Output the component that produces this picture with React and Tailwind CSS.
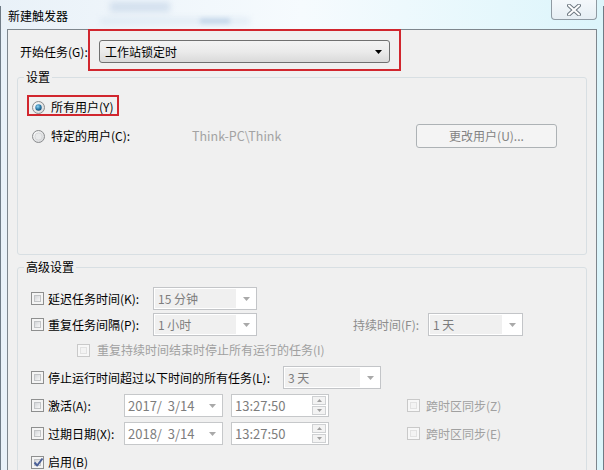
import React from "react";

function Checkbox({ checked = false, disabled = false }) {
  return (
    <span
      className={
        disabled
          ? "relative inline-block w-[13px] h-[13px] shrink-0 border border-[#c9c9c9] bg-[#f7f7f7]"
          : "relative inline-block w-[13px] h-[13px] shrink-0 border border-[#8e8f8f] bg-[#f4f4f4]"
      }
    >
      <span
        className={
          disabled
            ? "absolute left-[2px] top-[2px] w-[7px] h-[7px] border border-[#e2e2e2] bg-[#f3f3f3]"
            : "absolute left-[2px] top-[2px] w-[7px] h-[7px] border border-[#c2c4c6] bg-gradient-to-br from-[#d4d6d9] to-[#f7f7f7]"
        }
      />
      {checked && (
        <svg className="absolute left-[1px] top-[0px]" width="11" height="11" viewBox="0 0 11 11">
          <path d="M1.5 5.5 L4.2 8.5 L9.5 1.5" stroke="#4a5f97" strokeWidth="2" fill="none" strokeLinejoin="round" />
        </svg>
      )}
    </span>
  );
}

function Radio({ checked = false }) {
  return (
    <svg width="13" height="13" viewBox="0 0 13 13" className="shrink-0">
      <defs>
        <radialGradient id={checked ? "rgA" : "rgB"} cx="0.35" cy="0.35" r="0.8">
          <stop offset="0" stopColor="#ffffff" />
          <stop offset="1" stopColor="#d2d4d6" />
        </radialGradient>
        <radialGradient id="rdot" cx="0.4" cy="0.35" r="0.7">
          <stop offset="0" stopColor="#8ed4f5" />
          <stop offset="0.6" stopColor="#2a79a8" />
          <stop offset="1" stopColor="#13486e" />
        </radialGradient>
      </defs>
      <circle cx="6.5" cy="6.5" r="6" fill={checked ? "url(#rgA)" : "url(#rgB)"} stroke="#8a8c8e" strokeWidth="1" />
      {checked ? (
        <circle cx="6.5" cy="6.5" r="3.2" fill="url(#rdot)" />
      ) : (
        <circle cx="6.5" cy="6.5" r="3.6" fill="#e9eaeb" stroke="#d0d2d4" strokeWidth="0.8" />
      )}
    </svg>
  );
}

function DisCombo({ className, text }) {
  return (
    <div className={"flex border border-[#c3c5c8] bg-white " + className}>
      <div className="flex-1 m-[1px] mr-0 bg-[#f0f0f0] pl-[3px] flex items-center text-[#7d7d7d]">{text}</div>
      <div className="w-[20px] flex items-center justify-center">
        <svg width="7" height="4" viewBox="0 0 7 4">
          <path d="M0 0H7L3.5 4Z" fill="#a9a9a9" />
        </svg>
      </div>
    </div>
  );
}

function DateField({ text }) {
  return (
    <div className="flex w-[99px] h-full border border-[#c6c8ca] bg-white">
      <div className="flex-1 pl-[3px] flex items-center text-[#7d7d7d] text-[13px] whitespace-pre">{text}</div>
      <div className="w-[20px] flex items-center justify-center">
        <svg width="7" height="4" viewBox="0 0 7 4">
          <path d="M0 0H7L3.5 4Z" fill="#a9a9a9" />
        </svg>
      </div>
    </div>
  );
}

function TimeField({ text }) {
  return (
    <div className="flex w-[98px] h-full border border-[#c6c8ca] bg-white">
      <div className="flex-1 pl-[3px] flex items-center text-[#7d7d7d] text-[13px]">{text}</div>
      <div className="flex flex-col justify-center gap-[1px] pr-[2px]">
        <div className="w-[14px] h-[9px] border border-[#cfd1d3] bg-[#f3f3f3] flex items-center justify-center">
          <svg width="5" height="3" viewBox="0 0 5 3">
            <path d="M0 3H5L2.5 0Z" fill="#a0a0a0" />
          </svg>
        </div>
        <div className="w-[14px] h-[9px] border border-[#cfd1d3] bg-[#f3f3f3] flex items-center justify-center">
          <svg width="5" height="3" viewBox="0 0 5 3">
            <path d="M0 0H5L2.5 3Z" fill="#a0a0a0" />
          </svg>
        </div>
      </div>
    </div>
  );
}

export default function App() {
  return (
    <div className="relative w-[604px] h-[470px] overflow-hidden bg-gradient-to-r from-[#e9f1f8] via-[#f6fbfe] to-[#dcf5fb] font-['Noto_Sans_CJK_SC','Noto_Sans',sans-serif] text-[12px] leading-[16px] text-black">
      {/* window outer frame line */}
      <div className="absolute left-0 top-[6px] bottom-0 w-[2px] border-l border-[#6f7b86]" />
      <div className="absolute right-0 top-[6px] bottom-0 w-[2px] border-r border-[#6f7b86]" />
      {/* faint blurred background behind glass */}
      <div className="absolute left-[110px] top-[2px] w-[60px] h-[10px] bg-[#b8cbe2] opacity-50 blur-[3px]" />
      <div className="absolute left-[100px] top-[18px] w-[150px] h-[6px] bg-[#c7d8ea] opacity-40 blur-[3px]" />
      <div className="absolute left-[200px] top-[18px] w-[30px] h-[6px] bg-[#a9c3e0] opacity-50 blur-[2px]" />

      {/* title bar */}
      <div className="relative h-[29px] flex items-center pl-[8px] pt-[2px]">
        <span className="text-[12px]">新建触发器</span>
        <div className="absolute right-[7px] top-0 w-[46px] h-[20px] border border-t-0 border-[#8f9aa3] rounded-b-[4px] bg-gradient-to-b from-[#f4f8fb] to-[#e6eef4] flex items-center justify-center">
          <svg width="14" height="12" viewBox="0 0 14 12">
            <path d="M2 1.5 L12 10.5 M12 1.5 L2 10.5" stroke="#6d7780" strokeWidth="4" strokeLinecap="round" />
            <path d="M2 1.5 L12 10.5 M12 1.5 L2 10.5" stroke="#ffffff" strokeWidth="2" strokeLinecap="round" />
          </svg>
        </div>
      </div>

      {/* client area */}
      <div className="relative ml-[7px] w-[590px] h-[460px] border border-b-0 border-[#7e868d] bg-[#f0f0f0]">
        {/* start task row */}
        <div className="mt-[10px] h-[23px] flex items-center">
          <span className="pl-[12px] w-[91px] shrink-0">开始任务(G):</span>
          <div className="w-[291px] h-[23px] rounded-[3px] border border-[#707070] bg-gradient-to-b from-[#f3f3f3] via-[#ebebeb] to-[#dadada] flex items-center justify-between pl-[5px] pr-[7px]">
            <span>工作站锁定时</span>
            <svg width="7" height="4" viewBox="0 0 7 4">
              <path d="M0 0H7L3.5 4Z" fill="#000" />
            </svg>
          </div>
        </div>
        {/* red annotation */}
        <div className="absolute left-[80px] top-[-1px] w-[313px] h-[42px] border-2 border-[#d1262e]" />

        {/* 设置 group */}
        <fieldset className="mt-[6px] ml-[9px] w-[570px] border border-[#d8dfe3] rounded-[3px] pb-[106px]">
          <legend className="ml-[6px] px-[2px] leading-[16px]">设置</legend>
          <div className="relative mt-[12px] h-[20px] flex items-center pl-[14px]">
            <Radio checked />
            <span className="ml-[6px]">所有用户(Y)</span>
            <div className="absolute left-[9px] top-[-2px] w-[92px] h-[21px] border-2 border-[#d1262e]" />
          </div>
          <div className="mt-[7px] h-[24px] flex items-center pl-[14px]">
            <Radio />
            <span className="ml-[6px] w-[141px] shrink-0">特定的用户(C):</span>
            <span className="w-[224px] shrink-0 text-[#a3a3a3] text-[12.5px]">Think-PC\Think</span>
            <div className="w-[141px] h-[24px] rounded-[3px] border border-[#adb2b5] bg-[#f4f4f4] flex items-center justify-center text-[#838383]">
              更改用户(U)...
            </div>
          </div>
        </fieldset>

        {/* 高级设置 group */}
        <fieldset className="mt-[4px] ml-[9px] w-[570px] border border-[#d8dfe3] rounded-[3px] pb-[40px]">
          <legend className="ml-[6px] px-[2px] leading-[16px]">高级设置</legend>

          <div className="mt-[12px] h-[23px] flex items-center pl-[13px]">
            <Checkbox />
            <span className="ml-[4px] w-[105px] shrink-0">延迟任务时间(K):</span>
            <DisCombo className="w-[104px] h-[23px]" text="15 分钟" />
          </div>

          <div className="mt-[3px] h-[23px] flex items-center pl-[13px]">
            <Checkbox />
            <span className="ml-[4px] w-[105px] shrink-0">重复任务间隔(P):</span>
            <DisCombo className="w-[104px] h-[23px]" text="1 小时" />
            <span className="ml-[96px] w-[75px] shrink-0 text-[#8d8d8d]">持续时间(F):</span>
            <DisCombo className="w-[95px] h-[23px]" text="1 天" />
          </div>

          <div className="mt-[5px] h-[18px] flex items-center pl-[59px]">
            <Checkbox disabled />
            <span className="ml-[7px] text-[#a0a0a0]">重复持续时间结束时停止所有运行的任务(I)</span>
          </div>

          <div className="mt-[7px] h-[23px] flex items-center pl-[13px]">
            <Checkbox />
            <span className="ml-[4px] w-[235px] shrink-0">停止运行时间超过以下时间的所有任务(L):</span>
            <DisCombo className="w-[98px] h-[23px]" text="3 天" />
          </div>

          <div className="mt-[5px] h-[23px] flex items-center pl-[13px]">
            <Checkbox />
            <span className="ml-[4px] w-[76px] shrink-0">激活(A):</span>
            <DateField text="2017/  3/14" />
            <div className="ml-[8px] h-full">
              <TimeField text="13:27:50" />
            </div>
            <div className="ml-[78px] flex items-center">
              <Checkbox disabled />
              <span className="ml-[6px] text-[#a0a0a0]">跨时区同步(Z)</span>
            </div>
          </div>

          <div className="mt-[5px] h-[23px] flex items-center pl-[13px]">
            <Checkbox />
            <span className="ml-[4px] w-[76px] shrink-0">过期日期(X):</span>
            <DateField text="2018/  3/14" />
            <div className="ml-[8px] h-full">
              <TimeField text="13:27:50" />
            </div>
            <div className="ml-[78px] flex items-center">
              <Checkbox disabled />
              <span className="ml-[6px] text-[#a0a0a0]">跨时区同步(E)</span>
            </div>
          </div>

          <div className="mt-[8px] h-[18px] flex items-center pl-[13px]">
            <Checkbox checked />
            <span className="ml-[4px]">启用(B)</span>
          </div>
        </fieldset>
      </div>
    </div>
  );
}
